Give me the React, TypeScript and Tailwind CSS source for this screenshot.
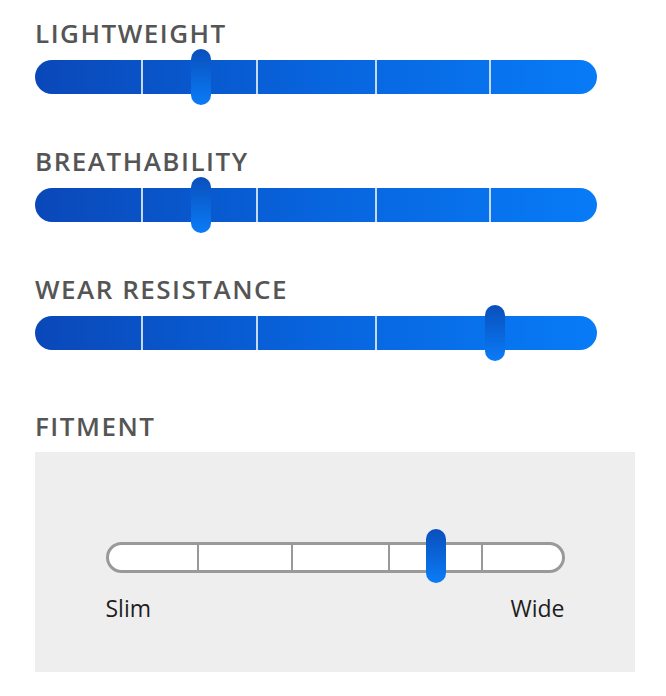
import React from 'react';

const font = { fontFamily: '"Open Sans", "DejaVu Sans", sans-serif' };

interface RatingProps {
  label: string;
  thumb: number;
  className?: string;
}

const segments = [106, 113, 117, 112, 106];

function RatingBar({ label, thumb, className }: RatingProps) {
  return (
    <div className={className}>
      <div className="text-[26px] leading-[32px] font-semibold tracking-[1.5px] text-[#555555]">{label}</div>
      <div className="relative mt-[11px] w-[562px] h-[34px]">
        <div className="h-full w-full rounded-full overflow-hidden bg-gradient-to-r from-[#0a48b9] via-[#0864dd] to-[#087bf7] flex">
          {segments.map((w, i) => (
            <div key={i} className={i < segments.length - 1 ? 'h-full border-r-2 border-[#c4d9f6]' : 'h-full'} style={{ width: w + (i < segments.length - 1 ? 2 : 0) }} />
          ))}
        </div>
        <div
          className="absolute top-[-11px] h-[56px] w-[20px] rounded-full bg-gradient-to-b from-[#0a4fbc] to-[#0a7cf7]"
          style={{ left: thumb }}
        />
      </div>
    </div>
  );
}

const fitSegments = [88, 92, 95, 91, 79];

export default function App() {
  return (
    <div className="min-h-screen bg-white pl-[35px] pt-[17px]" style={font}>
      <RatingBar label="LIGHTWEIGHT" thumb={156} />
      <RatingBar label="BREATHABILITY" thumb={156} className="mt-[51px]" />
      <RatingBar label="WEAR RESISTANCE" thumb={450} className="mt-[51px]" />

      <div className="mt-[60px] text-[26px] leading-[32px] font-semibold tracking-[1.5px] text-[#555555]">FITMENT</div>
      <div className="mt-[10px] w-[600px] h-[220px] bg-[#eeeeee] pt-[90px]">
        <div className="relative mx-auto w-[459px] h-[31px]">
          <div className="flex h-full w-full rounded-full border-[3px] border-[#999999] bg-white overflow-hidden">
            {fitSegments.map((w, i) => (
              <div key={i} className={i < fitSegments.length - 1 ? 'h-full border-r-2 border-[#999999]' : 'h-full'} style={{ width: w + (i < fitSegments.length - 1 ? 2 : 0) }} />
            ))}
          </div>
          <div className="absolute left-[320px] top-[-13px] h-[54px] w-[20px] rounded-full bg-gradient-to-b from-[#0a4fbc] to-[#0a7cf7]" />
        </div>
        <div className="mx-auto mt-[20px] flex w-[459px] justify-between text-[23px] leading-[30px] text-[#1e1e1e]">
          <span>Slim</span>
          <span>Wide</span>
        </div>
      </div>
    </div>
  );
}
